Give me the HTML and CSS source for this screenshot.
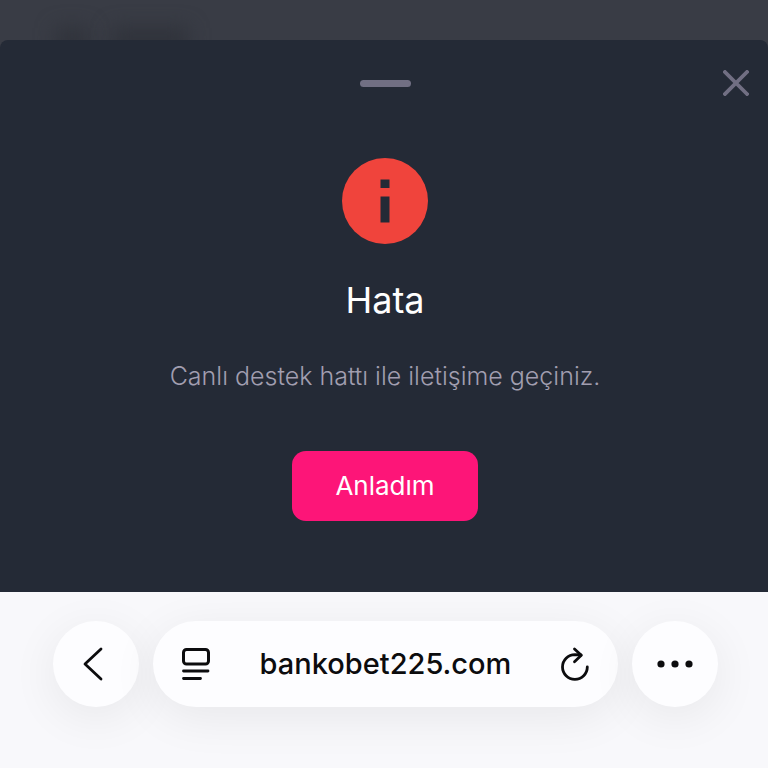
FILE: index.html
```html
<!DOCTYPE html>
<html lang="tr">
<head>
    <meta charset="UTF-8">
    <meta name="viewport" content="width=device-width, initial-scale=1.0">
    <title>Hata</title>
    <link rel="stylesheet" href="styles.css">
</head>
<body>
    <div class="backdrop">
        <span class="blur-spot"></span>
        <span class="blur-spot wide"></span>
    </div>

    <main class="sheet" role="dialog" aria-labelledby="sheet-title">
        <header class="sheet-header">
            <span class="handle"></span>
            <button type="button" class="close" aria-label="Kapat">
                <svg width="26" height="26" viewBox="0 0 26 26">
                    <path d="M2 2L24 24M24 2L2 24" fill="none" stroke="currentColor" stroke-width="3.8" stroke-linecap="square"/>
                </svg>
            </button>
        </header>

        <svg class="info-icon" width="86" height="86" viewBox="0 0 86 86">
            <circle cx="43" cy="43" r="43" fill="#f0443c"/>
            <path d="M38.5 21.5h9v8.5h-9zM38.5 38.5h9v26h-9z" fill="#242a36"/>
        </svg>

        <h1 id="sheet-title">Hata</h1>
        <p class="message">Canlı destek hattı ile iletişime geçiniz.</p>
        <button type="button" class="confirm">Anladım</button>
    </main>

    <nav class="browser-bar">
        <button type="button" class="round" aria-label="Geri">
            <svg width="40" height="40" viewBox="0 0 40 40">
                <path d="M25 5L9 20L25 35" fill="none" stroke="currentColor" stroke-width="2.8" stroke-linecap="round" stroke-linejoin="round"/>
            </svg>
        </button>

        <div class="address">
            <button type="button" class="tool" aria-label="Sayfa menüsü">
                <svg width="30" height="34" viewBox="0 0 30 34">
                    <g fill="none" stroke="currentColor" stroke-width="3" stroke-linecap="round">
                        <rect x="2.5" y="2.5" width="25" height="14.5" rx="3"/>
                        <path d="M2.5 24H27M2.500 31.5H19.5" stroke-width="2.8"/>
                    </g>
                </svg>
            </button>
            <a href="#" class="url">bankobet225.com</a>
            <button type="button" class="tool" aria-label="Yenile">
                <svg width="30" height="34" viewBox="0 0 30 34">
                    <g fill="none" stroke="currentColor" stroke-width="2.8" stroke-linecap="round" stroke-linejoin="round">
                        <path d="M27.3 20A12.400 12.400 0 1 1 14.900 7.600L21 8"/>
                        <path d="M14.500 2L21.300 8.300L14.500 14.800"/>
                    </g>
                </svg>
            </button>
        </div>

        <button type="button" class="round" aria-label="Diğer">
            <svg width="36" height="8" viewBox="0 0 36 8">
                <g fill="currentColor">
                    <circle cx="4" cy="4" r="3.6"/>
                    <circle cx="18" cy="4" r="3.6"/>
                    <circle cx="32" cy="4" r="3.6"/>
                </g>
            </svg>
        </button>
    </nav>
</body>
</html>
```

FILE: styles.css
```css
* {
    box-sizing: border-box;
}

body {
    font-family: Inter, "Liberation Sans", sans-serif;
    background: #393c45;
    margin: 0;
    min-height: 100vh;
    display: flex;
    flex-direction: column;
}

button {
    font-family: inherit;
    border: none;
    padding: 0;
    background: none;
    color: inherit;
    cursor: pointer;
}

svg {
    display: block;
}

.backdrop {
    height: 40px;
    padding: 28px 0 0 56px;
    display: flex;
    gap: 24px;
    overflow: hidden;
}

.blur-spot {
    width: 32px;
    height: 24px;
    background: #2f323a;
    filter: blur(10px);
}

.blur-spot.wide {
    width: 76px;
}

.sheet {
    display: flex;
    flex-direction: column;
    align-items: center;
    padding: 28px 19px 71px 21px;
    background: #242a36;
    border-radius: 8px 8px 0 0;
    color: #fff;
    text-align: center;
}

.sheet-header {
    width: 100%;
    display: grid;
    grid-template-columns: 1fr auto 1fr;
    align-items: center;
}

.handle {
    grid-column: 2;
    width: 51px;
    height: 7px;
    border-radius: 4px;
    background: #716f83;
}

.close {
    justify-self: end;
    padding: 2px 0;
    color: #716f83;
}

.info-icon {
    margin-top: 60px;
}

h1 {
    margin: 32px 0 0;
    font-size: 36px;
    line-height: 48px;
    font-weight: 400;
}

.message {
    margin: 34px 0 0;
    font-size: 25px;
    line-height: 36px;
    font-weight: 300;
    color: #a19eb0;
}

.confirm {
    margin-top: 57px;
    padding: 17px 43px;
    border-radius: 14px;
    background: #fd1578;
    color: #fff;
    font-size: 26px;
    line-height: 36px;
}

.browser-bar {
    flex: 1;
    display: flex;
    align-items: flex-start;
    gap: 14px;
    padding: 29px 50px 48px 53px;
    background: #f8f8fb;
    color: #0c0c0e;
    overflow: hidden;
}

.round,
.address {
    height: 86px;
    border-radius: 43px;
    background: #fdfdff;
    box-shadow: 0 10px 48px rgba(0, 0, 0, 0.07);
}

.round {
    flex: none;
    width: 86px;
    display: flex;
    align-items: center;
    justify-content: center;
}

.address {
    flex: 1;
    display: flex;
    align-items: center;
    justify-content: space-between;
    padding: 0 28px;
}

.url {
    color: inherit;
    font-size: 29px;
    line-height: 40px;
    font-weight: 500;
    text-decoration: none;
}
```
